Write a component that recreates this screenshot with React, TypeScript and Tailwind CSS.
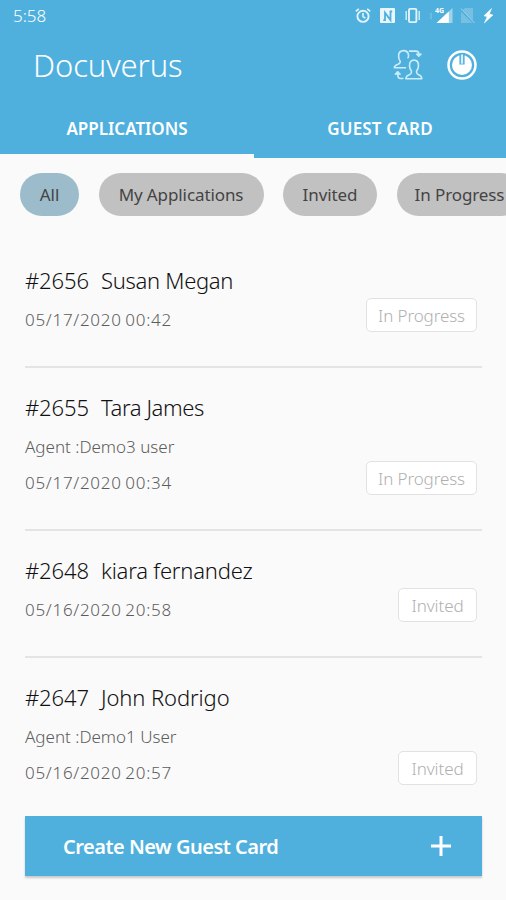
import React from "react";

type Application = {
  id: string;
  name: string;
  nameSpacing: string;
  agent?: string;
  date: string;
  status: "In Progress" | "Invited";
};

const applications: Application[] = [
  { id: "#2656", name: "Susan Megan", nameSpacing: "tracking-[-0.3px]", date: "05/17/2020 00:42", status: "In Progress" },
  { id: "#2655", name: "Tara James", nameSpacing: "tracking-[-0.4px]", agent: "Agent :Demo3 user", date: "05/17/2020 00:34", status: "In Progress" },
  { id: "#2648", name: "kiara fernandez", nameSpacing: "tracking-[-0.2px]", date: "05/16/2020 20:58", status: "Invited" },
  { id: "#2647", name: "John Rodrigo", nameSpacing: "tracking-[-0.1px]", agent: "Agent :Demo1 User", date: "05/16/2020 20:57", status: "Invited" },
];

const chips = [
  { label: "All", box: "w-[59px] bg-[#9dbccb]" },
  { label: "My Applications", box: "w-[165px] bg-[#c1c1c1]" },
  { label: "Invited", box: "w-[94px] bg-[#c1c1c1]" },
  { label: "In Progress", box: "w-[126px] bg-[#c1c1c1]" },
];

function StatusIcons() {
  return (
    <svg className="h-[20px] w-[146px]" viewBox="354 6 146 20" fill="none" stroke="#e0f4fb" strokeWidth="1.9">
      <circle cx="363" cy="16.3" r="5.6" />
      <path d="M363 13v3.6l2.4 1.6M355.8 11.4l3-2.6M370.2 11.4l-3-2.6" strokeWidth="1.6" />
      <rect x="380" y="8" width="15" height="15" rx="1" fill="#e9f7fc" stroke="none" />
      <path d="M383.300 20.200h1.700v-7.500l5.500 7.300v-8.500h1.700" stroke="#4fb0de" strokeWidth="1.800" />
      <rect x="409" y="8.900" width="7.400" height="13.200" rx="1" />
      <path d="M406.200 11v9M419.200 11v9" strokeWidth="1.3" />
      <path d="M431 13v6" stroke="#8bcbea" strokeWidth="1" />
      <path d="M452.500 8v15h-16z" fill="#9fd3ec" stroke="none" />
      <path d="M448.800 11.500v11.500h-12.200z" fill="#fff" stroke="none" />
      <text x="435" y="12.500" fill="#fff" stroke="none" fontSize="7" fontWeight="700" fontFamily="Noto Sans, sans-serif">4G</text>
      <path d="M461 12l4-4h8v15h-12z" fill="#78c0e2" stroke="none" />
      <path d="M460 9l14 14" stroke="#4fb0de" strokeWidth="2.4" />
      <path d="M461 8.500l13.500 14.500" stroke="#9fd3ec" strokeWidth="1" />
      <path d="M491.500 8.500l-7.500 7.300 3.200 1-2.900 6.200 8.700-8-3.600-1z" fill="#fff" stroke="#fff" strokeWidth=".5" />
    </svg>
  );
}

function SwitchUsersIcon() {
  return (
    <svg className="h-[34px] w-[32px]" viewBox="392 48 32 34" fill="none" stroke="#cdedf9" strokeWidth="1.600" strokeLinecap="round" strokeLinejoin="round">
      <path d="M405.500 67.800h-11.200c.2-2.300 1.200-2.900 3.700-3.600 1.500-.5 2.300-1 2.300-2.600-1.300-1.600-1.700-3.300-1.700-5.600 0-3.600 2-5.400 5-5.400 2.500 0 4.500 1.400 4.900 4.200 0 1.500.2 2.300-.5 3" />
      <path d="M406.500 78.800h-.7c.2-2.700 1.200-3.400 3.600-4.100 1.500-.5 2-1.100 2-2.500v-1.300c-1.200-1.500-1.900-3.100-1.900-5.200 0-3.700 1.600-5.600 4.500-5.600s4.500 1.900 4.500 5.600c0 2.100-.7 3.700-1.900 5.200v1.300c0 1.400.5 2 2 2.500 2.200.7 3 1.400 3.200 4.100z" />
      <path d="M409.500 51.100h6.500q2.800 0 3 3.600M402.800 78.500h-2.300q-2.600 0-2.600-3v-2" />
      <path d="M416.500 54h5l-2.500 2.600zM395.200 74.300h5.400l-2.700-3z" fill="#cdedf9" strokeWidth="1" />
    </svg>
  );
}

function PowerIcon() {
  return (
    <svg className="h-[32px] w-[32px]" viewBox="0 0 32 32" fill="none">
      <circle cx="16" cy="16" r="13.500" stroke="#fff" strokeWidth="2.500" />
      <circle cx="16" cy="16" r="10" fill="#fff" />
      <path d="M13.400 5h5.200v10.500h-5.200z" fill="#4fb0de" />
      <path d="M16 5.500v9.200" stroke="#d5effa" strokeWidth="2.200" />
    </svg>
  );
}

function StatusBadge({ status }: { status: Application["status"] }) {
  return (
    <div className={`flex h-[34px] items-center justify-center rounded-[5px] border-[1.500px] border-[#e2e2e2] bg-white pt-px text-[17px] text-[#b0b0b0] ${status === "Invited" ? "w-[79px]" : "w-[111px]"}`}>
      <span className="whitespace-nowrap font-light tracking-[-0.1px]">{status}</span>
    </div>
  );
}

function ApplicationRow({ item }: { item: Application }) {
  return (
    <li className="flex items-end justify-between border-b-2 border-[#e4e4e4] pt-[24px] last:border-transparent">
      <div className="pb-[28px]">
        <div className="mb-[7px] flex h-[30px] items-center text-[22px] font-light text-[#111]">
          <span className="w-[76px] tracking-[-0.1px]">{item.id}</span>
          <span className={`whitespace-nowrap ${item.nameSpacing}`}>{item.name}</span>
        </div>
        {item.agent && <p className="flex h-[36px] items-center text-[17px] font-light text-[#5c5c5c]">{item.agent}</p>}
        <p className="flex h-[36px] items-center text-[17px] font-light tracking-[0.72px] text-[#5c5c5c] [word-spacing:-1.5px]">{item.date}</p>
      </div>
      <div className="mr-[5px] pb-[34px]">
        <StatusBadge status={item.status} />
      </div>
    </li>
  );
}

export default function App() {
  return (
    <div className="flex h-[900px] w-[506px] flex-col overflow-hidden bg-[#fafafa] font-['Noto_Sans','Open_Sans',sans-serif]">
      <header className="flex h-[158px] shrink-0 flex-col bg-[#4fb0de] text-white">
        <div className="flex h-[32px] items-center justify-between pr-[6px] pl-[13px]">
          <span className="text-[17px] font-light">5:58</span>
          <StatusIcons />
        </div>
        <div className="flex h-[68px] items-center pr-[28px] pl-[33px]">
          <h1 className="mt-[-2px] flex-1 text-[31px] font-light tracking-[-0.1px]">Docuverus</h1>
          <div className="mt-[-3px] flex items-center gap-[22px]">
            <SwitchUsersIcon />
            <PowerIcon />
          </div>
        </div>
        <nav className="flex flex-1 text-[17px] font-semibold">
          <button className="w-[254px] border-b-4 border-[#fafafa] pt-[4px]">APPLICATIONS</button>
          <button className="flex-1 border-b-4 border-transparent pt-[4px] tracking-[0.2px]">GUEST CARD</button>
        </nav>
      </header>

      <div className="mt-[15px] flex h-[43px] shrink-0 gap-[19.500px] pl-[20px]">
        {chips.map((chip) => (
          <button key={chip.label} className={`shrink-0 rounded-full pt-px text-[17px] tracking-[-0.1px] text-[#444] ${chip.box}`}>
            <span className="whitespace-nowrap">{chip.label}</span>
          </button>
        ))}
      </div>

      <ul className="mt-[25px] h-[575px] shrink-0 pr-[24px] pl-[25px]">
        {applications.map((item) => (
          <ApplicationRow key={item.id} item={item} />
        ))}
      </ul>

      <button className="mx-[24px] ml-[25px] flex h-[60px] shrink-0 items-center justify-between bg-[#4fb0de] pr-[31px] pl-[38px] text-[20px] font-semibold text-white shadow-[0_2px_2px_rgba(0,0,0,0.2)]">
        <span className="mt-[2px] tracking-[-0.5px]">Create New Guest Card</span>
        <svg className="h-[20px] w-[20px]" viewBox="0 0 20 20" stroke="#fff" strokeWidth="3">
          <path d="M10 0v20M0 10h20" />
        </svg>
      </button>
    </div>
  );
}
